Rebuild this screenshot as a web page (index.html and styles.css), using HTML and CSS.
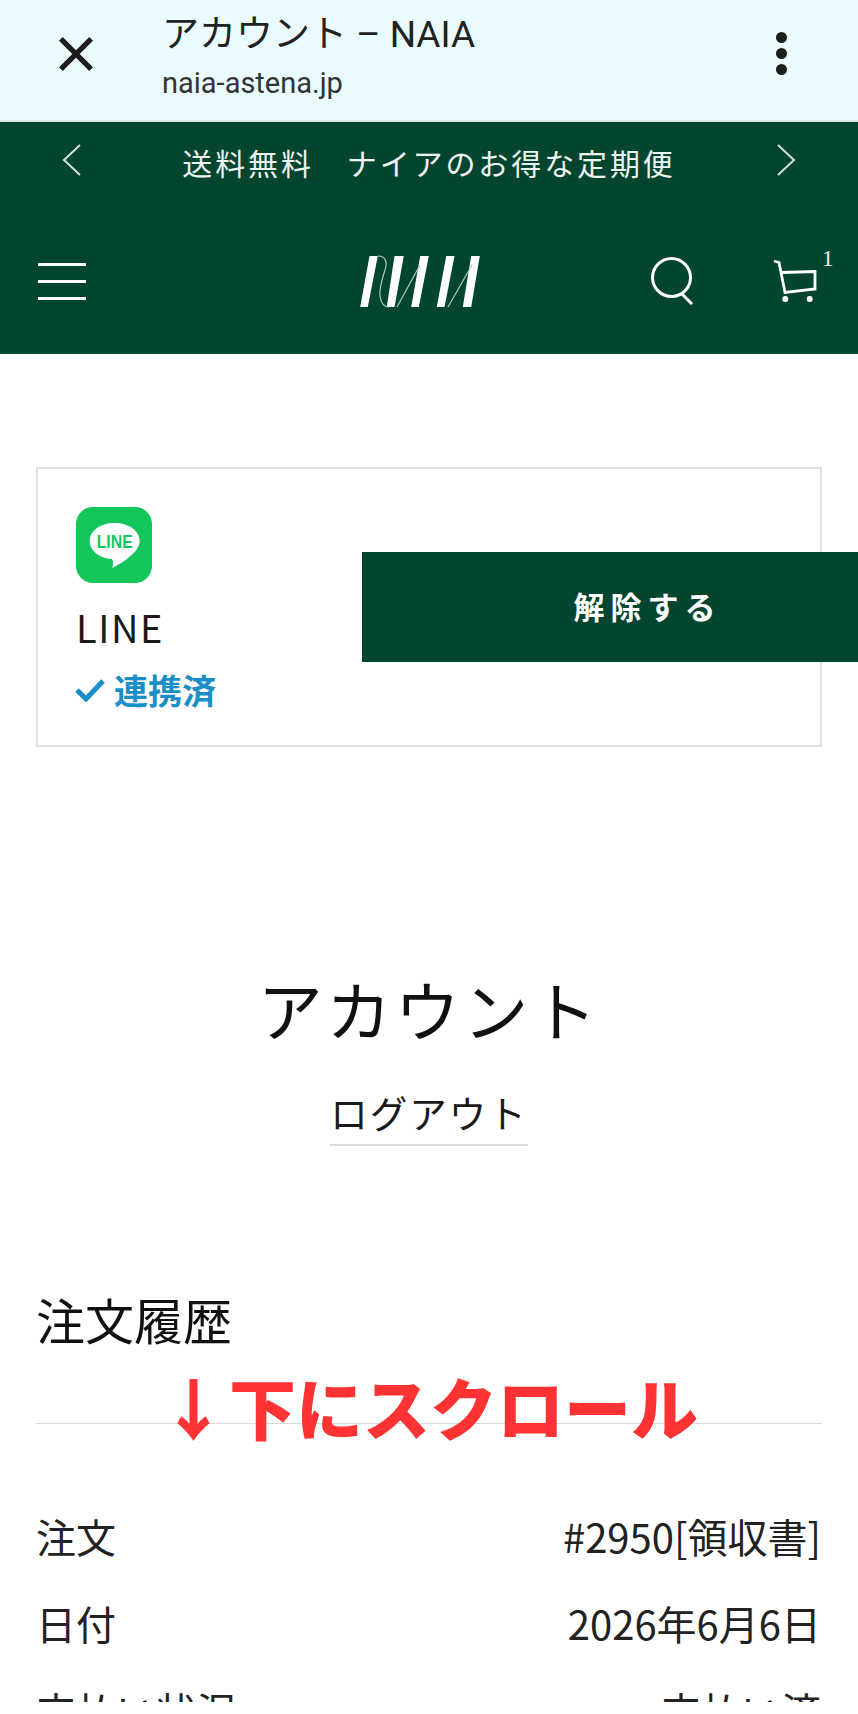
FILE: index.html
```html
<!DOCTYPE html>
<html lang="ja">
<head>
    <meta charset="UTF-8">
    <title>アカウント – NAIA</title>
    <meta name="viewport" content="width=device-width,initial-scale=1.0">
    <link rel="stylesheet" href="styles.css">
</head>
<body>
<div class="chrome">
    <svg class="closeIcon" viewBox="0 0 36 36"><path d="M2 2 L34 34 M34 2 L2 34"/></svg>
    <div class="chromeTitle">
        <div class="pageName">アカウント – NAIA</div>
        <div class="pageHost">naia-astena.jp</div>
    </div>
    <div class="dots"><span></span><span></span><span></span></div>
</div>
<div class="header">
    <div class="notice">
        <svg class="noticeArrow" viewBox="0 0 20 32"><path d="M18 1 L2 16 L18 31"/></svg>
        <span class="noticeText">送料無料　ナイアのお得な定期便</span>
        <svg class="noticeArrow" viewBox="0 0 20 32"><path d="M2 1 L18 16 L2 31"/></svg>
    </div>
    <div class="nav">
        <div class="burger"><span></span><span></span><span></span></div>
        <svg class="logo" viewBox="0 0 120 53">
            <path class="logoBar" d="M9.5 1 H17.8 L7.8 52 H.2 Z M34.5 1 H43.8 L34.5 52 H26.8 Z M60.2 1 H68.8 L58.8 52 H51.2 Z M86.2 1 H94.5 L84.5 52 H76.8 Z M111.2 1 H119.8 L111.2 52 H102.8 Z"/>
            <path class="logoLine" d="M18 1 C27 1 27 9 25 15 C22 25 19 33 20 41 C21 48 24 52 29 52 M37 52 L60 10 M88 52 L112 10"/>
        </svg>
        <svg class="search" viewBox="0 0 42 48"><circle cx="20.5" cy="20.5" r="19"/><path d="M30 36 L41 47"/></svg>
        <div class="cart">
            <svg viewBox="0 0 44 44"><path d="M1 2 L6 3.5 L12 33.5 L42 30 V12.5 L8.5 13.5"/><circle cx="12.3" cy="40" r="3"/><circle cx="36.7" cy="40" r="3"/></svg>
            <span class="cartCount">1</span>
        </div>
    </div>
</div>
<div class="main">
    <div class="lineCard">
        <svg class="lineIcon" viewBox="0 0 76 76">
            <rect width="76" height="76" rx="17" fill="#14c65a"/>
            <path fill="#fff" d="M38.7 16 C24 16 13.7 24 13.7 34 C13.7 44 24 51 35 52 C37 52 37.5 54 36.5 61 C46 56 63.7 45 63.7 34 C63.7 24 53 16 38.7 16 Z"/>
            <text x="38.7" y="41" text-anchor="middle" textLength="36" lengthAdjust="spacingAndGlyphs" class="lineLogoText">LINE</text>
        </svg>
        <div class="lineName">LINE</div>
        <div class="lineState">
            <svg class="check" viewBox="0 0 30 24"><path d="M2 12 L11 21 L28 3"/></svg>
            <span>連携済</span>
        </div>
        <div class="unlinkBtn">解除する</div>
    </div>
    <h1 class="pageTitle">アカウント</h1>
    <div class="logoutRow"><span class="logout">ログアウト</span></div>
    <h2 class="historyTitle">注文履歴</h2>
    <div class="scrollHint"><span class="hintArrow">↓</span>下にスクロール</div>
    <div class="orderList">
        <div class="orderRow"><span>注文</span><span>#2950[領収書]</span></div>
        <div class="orderRow"><span>日付</span><span>2026年6月6日</span></div>
        <div class="orderRow"><span>支払い状況</span><span>支払い済</span></div>
    </div>
</div>
<div class="bottomEdge"></div>
</body>
</html>
```

FILE: styles.css
```css
* {
    margin: 0;
    padding: 0;
    box-sizing: border-box;
}

html, body {
    height: 100%;
    overflow: hidden;
}

body {
    background-color: #fff;
    font-family: "Noto Sans CJK JP", "Noto Sans", sans-serif;
    color: #1a1a1a;
    position: relative;
}

/* browser bar */
.chrome {
    height: 122px;
    background: #e9fbfc;
    border-bottom: 2px solid #dce9e9;
    display: flex;
    align-items: center;
    padding: 0 71px 0 59px;
}

.closeIcon {
    width: 34px;
    height: 34px;
    fill: none;
    stroke: #1c1c1c;
    stroke-width: 5.5;
    margin-top: -13px;
}

.chromeTitle {
    flex: 1;
    margin-left: 69px;
    margin-top: -10px;
}

.pageName {
    font-family: "Roboto", "Noto Sans CJK JP", sans-serif;
    font-size: 37px;
    line-height: 56px;
    color: #222;
}

.pageHost {
    font-family: "Roboto", sans-serif;
    font-size: 29px;
    line-height: 40px;
    color: #333;
}

.dots {
    display: flex;
    flex-direction: column;
    gap: 5px;
    margin-top: -14px;
}

.dots span {
    width: 11px;
    height: 11px;
    border-radius: 50%;
    background: #1c1c1c;
}

/* green header */
.header {
    height: 232px;
    background: #044530;
    color: #fff;
}

.notice {
    display: flex;
    align-items: center;
    justify-content: space-between;
    padding: 0 62px;
    height: 80px;
}

.noticeArrow {
    width: 20px;
    height: 32px;
    fill: none;
    stroke: #d4e0db;
    stroke-width: 2;
    margin-top: -4px;
}

.noticeText {
    font-size: 30px;
    letter-spacing: 2.9px;
    color: #eef4f1;
}

.nav {
    display: flex;
    align-items: center;
    height: 152px;
    padding: 6px 0 0 38px;
}

.burger {
    width: 48px;
    display: flex;
    flex-direction: column;
    gap: 14px;
}

.burger span {
    height: 3px;
    background: #fff;
}

.logo {
    width: 120px;
    height: 53px;
    margin-left: 274px;
    flex: none;
}

.logoBar {
    fill: #fff;
}

.logoLine {
    fill: none;
    stroke: #a8cdbd;
    stroke-width: 1.2;
}

.search {
    width: 42px;
    height: 48px;
    margin-left: 171px;
    fill: none;
    stroke: #fff;
    stroke-width: 3;
    flex: none;
}

.cart {
    margin-left: 80px;
    position: relative;
}

.cart svg {
    width: 44px;
    height: 44px;
    display: block;
    fill: none;
    stroke: #fff;
    stroke-width: 2.8;
}

.cart svg circle {
    fill: #fff;
    stroke: none;
}

.cartCount {
    position: absolute;
    top: -12px;
    left: 49px;
    font-family: "Liberation Serif", serif;
    font-size: 23px;
    line-height: 24px;
    color: #e8f0ec;
}

/* page */
.main {
    padding: 113px 36px 0 36px;
}

.lineCard {
    position: relative;
    height: 280px;
    border: 2px solid #dfdfdf;
    padding: 38px 0 0 38px;
}

.lineIcon {
    width: 76px;
    height: 76px;
    display: block;
}

.lineLogoText {
    font-family: "Liberation Sans", sans-serif;
    font-weight: 700;
    font-size: 18px;
    fill: #14c65a;
}

.lineName {
    font-size: 38px;
    line-height: 48px;
    letter-spacing: 1.6px;
    margin-top: 20px;
}

.lineState {
    display: flex;
    align-items: center;
    margin-top: 16px;
    margin-left: -1px;
    font-size: 34px;
    line-height: 46px;
    font-weight: 700;
    color: #1a8ec6;
}

.check {
    width: 30px;
    height: 24px;
    margin-right: 9px;
    fill: none;
    stroke: #1a8ec6;
    stroke-width: 5;
}

.unlinkBtn {
    position: absolute;
    left: 324px;
    top: 83px;
    width: 496px;
    height: 110px;
    padding: 0 0 4px 75px;
    background: #044530;
    color: #fff;
    font-size: 31px;
    font-weight: 700;
    letter-spacing: 6px;
    display: flex;
    align-items: center;
    justify-content: center;
}

.pageTitle {
    margin-top: 214px;
    font-size: 65px;
    font-weight: 400;
    letter-spacing: 3.5px;
    line-height: 94px;
    text-align: center;
    color: #111;
}

.logoutRow {
    text-align: center;
    margin-top: 29px;
}

.logout {
    display: inline-block;
    font-size: 37.5px;
    letter-spacing: 2px;
    line-height: 56px;
    border-bottom: 2px solid #d8d8d8;
    padding-bottom: 4px;
}

.historyTitle {
    margin-top: 138px;
    font-size: 49px;
    font-weight: 400;
    line-height: 70px;
    color: #111;
    padding-bottom: 69px;
    border-bottom: 1px solid #d9d9d9;
}

.scrollHint {
    position: absolute;
    left: 160px;
    top: 1364px;
    font-size: 67px;
    line-height: 84px;
    font-weight: 900;
    color: #ff3333;
    white-space: nowrap;
    display: flex;
    align-items: center;
}

.hintArrow {
    width: 69px;
}

.orderList {
    margin-top: 69px;
}

.orderRow {
    display: flex;
    justify-content: space-between;
    font-size: 40px;
    line-height: 87px;
    padding-right: 1px;
    color: #222;
}

.bottomEdge {
    position: absolute;
    left: 0;
    right: 0;
    top: 1702px;
    bottom: 0;
    background: #fff;
}
```
